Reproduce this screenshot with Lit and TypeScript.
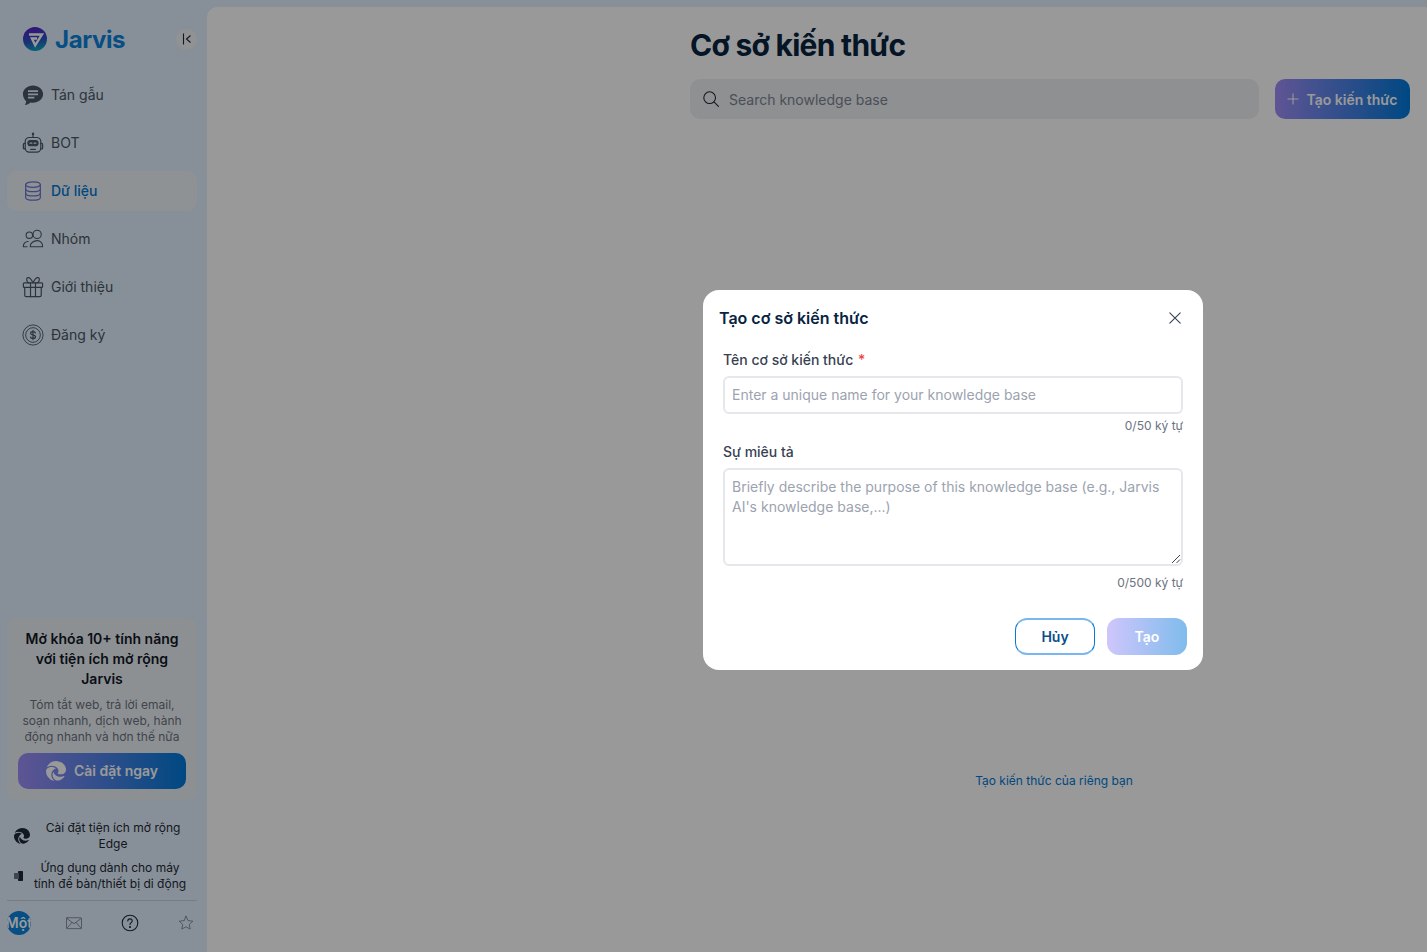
import { LitElement, html, css, svg } from "lit";
import { customElement } from "lit/decorators.js";

const edge = (size: number, fill: string) => html`<svg width=${size} height=${size} viewBox="0 0 24 24" aria-hidden="true">
  <path fill=${fill} d="M21.86 17.86q.14 0 .25.12.1.13.1.25t-.11.33l-.32.46-.43.53-.44.5q-.21.25-.38.42l-.22.23q-.58.53-1.34 1.04-.76.51-1.6.91-.86.4-1.74.64t-1.67.24q-.9 0-1.69-.28-.8-.28-1.48-.78-.68-.5-1.22-1.17-.53-.66-.92-1.44-.38-.77-.58-1.6-.2-.83-.2-1.67 0-1 .32-1.96.33-.97.87-1.8.14.95.55 1.77.41.82 1.02 1.5.6.68 1.38 1.21.78.54 1.64.9.86.36 1.77.56.92.2 1.8.2 1.12 0 2.18-.24 1.06-.23 2.06-.72l.2-.1.2-.05zm-15.5-1.27q0 1.1.27 2.15.27 1.06.78 2.03.51.96 1.24 1.77.74.82 1.66 1.4-1.47-.2-2.8-.74-1.33-.55-2.48-1.37-1.15-.83-2.08-1.9-.92-1.07-1.58-2.33T.36 14.94Q0 13.54 0 12.06q0-.81.32-1.49.31-.68.83-1.23.53-.55 1.2-.96.66-.4 1.35-.66.74-.27 1.5-.39.78-.12 1.55-.12.7 0 1.42.1.72.12 1.4.35.68.23 1.32.57.63.35 1.16.83-.35 0-.7.07-.33.07-.65.23v-.02q-.63.28-1.2.74-.57.46-1.05 1.04-.48.58-.87 1.26-.38.67-.65 1.39-.27.71-.42 1.44-.15.72-.15 1.38zM11.96.06q1.7 0 3.33.39 1.63.38 3.07 1.15 1.43.77 2.62 1.93 1.18 1.16 1.98 2.7.49.94.76 1.96.28 1 .28 2.08 0 .89-.23 1.7-.24.8-.69 1.48-.45.68-1.1 1.22-.64.53-1.45.88-.54.24-1.11.36-.58.13-1.16.13-.42 0-.97-.03-.54-.03-1.1-.12-.55-.1-1.05-.28-.5-.19-.84-.5-.12-.09-.23-.24-.1-.16-.1-.33 0-.15.16-.35.16-.2.35-.5.2-.28.36-.68.16-.4.16-.95 0-1.06-.4-1.96-.4-.91-1.06-1.64-.66-.74-1.52-1.28-.86-.55-1.79-.89-.84-.3-1.72-.44-.87-.14-1.76-.14-1.55 0-3.06.45T.94 7.55q.71-1.74 1.81-3.13 1.1-1.38 2.52-2.35Q6.68 1.1 8.37.58q1.7-.52 3.58-.52Z"/>
</svg>`;

const ico = (body: unknown, size = 22, sw = 1.3) => html`<svg class="ico" width=${size} height=${size} viewBox="0 0 24 24" fill="none" stroke="currentColor" stroke-width=${sw} stroke-linecap="round" stroke-linejoin="round" aria-hidden="true">${body}</svg>`;

const icons = {
  chat: html`<svg class="ico" width="22" height="22" viewBox="0 0 24 24" aria-hidden="true"><path fill="currentColor" d="M12 1.500c6 0 11 3.900 11 9.500 0 5.400-5 9.500-11 9.500-1 0-2-.1-2.900-.3C7.700 21.700 5.700 22.700 3 23c1-1.300 1.500-2.700 1.600-4.200C2.400 17 1 14.200 1 11 1 5.400 6 1.500 12 1.500Z"/><path stroke="#e2f0fd" stroke-width="1.900" d="M6.500 7.800h11M6.500 11.300h11M6.500 14.800h7"/></svg>`,
  bot: ico(svg`<path d="M12 2.500v3.500"/><circle cx="12" cy="2" r=".7" fill="currentColor"/><rect x="3.500" y="6" width="17" height="16" rx="4.500"/><path d="M3.500 12.500H2.500c-.6 0-1 .4-1 1v4c0 .6.4 1 1 1h1M20.500 12.500h1c.6 0 1 .4 1 1v4c0 .6-.4 1-1 1h-1"/><rect x="6.500" y="9.500" width="11" height="5.500" rx="2.700" fill="currentColor"/><path d="M9.500 19h5"/><path d="M8.800 12.200h2M13.200 12.200h2" stroke="#e2f0fd"/>`),
  data: ico(svg`<ellipse cx="12" cy="5" rx="8" ry="3"/><path d="M4 5v14c0 1.700 3.600 3 8 3s8-1.300 8-3V5"/><path d="M4 9.700c0 1.700 3.600 3 8 3s8-1.300 8-3M4 14.400c0 1.700 3.600 3 8 3s8-1.300 8-3"/>`),
  team: ico(svg`<circle cx="8" cy="7.800" r="3.500"/><circle cx="16.500" cy="7" r="4.500"/><path d="M9 20.500h13.500c.3-4.200-2.500-6.700-6-6.700s-7.800 2.500-7.500 6.700Z"/><path d="M5.500 20.500H1.500c-.3-3.200 1.700-5.800 5.200-5.800"/>`, 22, 1.2),
  gift: ico(svg`<rect x="1.500" y="7.500" width="21" height="5" rx="1"/><path d="M3 12.500V21a1.500 1.500 0 0 0 1.500 1.500h15A1.500 1.500 0 0 0 21 21v-8.500"/><path d="M9.300 7.500v15M14.700 7.500v15"/><path d="M12 7.500C10 3 8 1.300 6.300 1.800 4.300 2.400 4.800 6.200 7.500 7.500M12 7.500c2-4.500 4-6.200 5.700-5.700 2 .6 1.500 4.400-1.200 5.700"/>`),
  dollar: html`<svg class="ico" width="22" height="22" viewBox="0 0 24 24" fill="none" stroke="currentColor" stroke-width="1" aria-hidden="true"><circle cx="12" cy="12" r="11"/><circle cx="12" cy="12" r="8"/><path stroke-width="1.300" stroke-linecap="round" d="M14.600 9.800c-.3-.9-1.300-1.500-2.600-1.500-1.500 0-2.600.8-2.600 1.900 0 2.600 5.400 1.300 5.400 3.700 0 1.100-1.200 1.900-2.800 1.900-1.400 0-2.400-.6-2.800-1.600M12 7v10"/></svg>`,
};

const navItems = [
  ["Tán gẫu", icons.chat, false],
  ["BOT", icons.bot, false],
  ["Dữ liệu", icons.data, true],
  ["Nhóm", icons.team, false],
  ["Giới thiệu", icons.gift, false],
  ["Đăng ký", icons.dollar, false],
] as const;

@customElement("app-root")
export class AppRoot extends LitElement {
  static styles = css`
    :host { display: block; width: 100%; height: 952px; overflow: hidden; position: relative; font-family: Inter, "Noto Sans", sans-serif; background: #e2f0fd; color: #0f172a; }
    * { box-sizing: border-box; }
    .shell { display: flex; height: 952px; }
    .side { width: 207px; flex: none; display: flex; flex-direction: column; height: 100%; }
    .brand { display: flex; align-items: center; height: 78px; padding: 0 10px 0 23px; }
    .logo { width: 24px; height: 24px; flex: none; }
    .brand-name { font-size: 24px; font-weight: 700; line-height: 29px; color: #0a82dc; margin-left: 8px; flex: 1; letter-spacing: -0.4px; }
    .collapse { width: 21px; height: 21px; border-radius: 50%; background: #f1f3f5; display: flex; align-items: center; justify-content: center; color: #1f2937; }
    .nav { display: flex; flex-direction: column; gap: 8px; padding: 0 10px 0 7px; margin-top: -3px; }
    .nav-item { display: flex; align-items: center; height: 40px; padding-left: 15px; gap: 7px; border-radius: 10px; font-size: 14px; color: #4b5563; }
    .nav-item span { margin-bottom: 2px; }
    .nav-item.on { background: #eef4f8; color: #0078d4; font-weight: 500; }
    .nav-item.on .ico { color: #6d74d0; }
    .ico { flex: none; display: block; }
    .spacer { flex: 1; }
    .promo { margin: 0 10px 0 7px; padding: 11px; background: #ebf1f5; border-radius: 10px; text-align: center; }
    .promo-title { font-size: 14px; font-weight: 600; line-height: 20px; color: #111827; margin: 0 0 8px; }
    .promo-text { font-size: 12px; line-height: 16px; color: #6b7280; margin: 0 0 8px; }
    .install { height: 36px; border-radius: 10px; display: flex; align-items: center; justify-content: center; gap: 8px; color: #fff; font-size: 14px; font-weight: 600; background: linear-gradient(90deg, #9f8df7, #0079d9); }
    .install span { margin-bottom: 2px; }
    .links { padding: 20px 10px 0 7px; display: flex; flex-direction: column; gap: 8px; }
    .link { display: flex; align-items: center; font-size: 12px; line-height: 16px; color: #1f2937; text-align: center; }
    .link span { flex: 1; }
    .link svg { flex: none; }
    .link-edge svg { margin: 0 4px 0 7px; }
    .link-edge span { margin-right: 5px; }
    .link-app svg { margin: 0 5px 0 6px; }
    .link-app span { margin-right: 7px; }
    .foot { margin: 8px 10px 6px 7px; border-top: 1px solid #c9ced4; height: 46px; display: flex; align-items: center; gap: 37px; color: #6b7280; }
    .foot > * { margin-bottom: 2px; }
    .avatar { width: 24px; height: 24px; border-radius: 50%; background: #0a82dc; color: #fff; font-size: 14px; font-weight: 600; line-height: 24px; overflow: hidden; white-space: nowrap; display: flex; justify-content: center; margin-right: -3px; }
    .main { flex: 1; margin-top: 7px; background: #fff; border-top-left-radius: 10px; display: grid; grid-template-columns: 483px 1fr; }
    .col { display: flex; flex-direction: column; padding-right: 17px; height: 100%; }
    h1 { font-size: 30px; font-weight: 700; line-height: 36px; margin: 20px 0 16px; color: #082440; letter-spacing: -0.73px; }
    .bar { display: flex; gap: 16px; }
    .search { flex: 1; height: 40px; border-radius: 10px; background: #eef0f2; display: flex; align-items: center; gap: 9px; padding-left: 12px; font-size: 14px; color: #7b8494; }
    .create { width: 135px; height: 40px; border-radius: 10px; color: #fff; font-size: 14px; font-weight: 600; display: flex; align-items: center; justify-content: center; gap: 7px; background: linear-gradient(90deg, #9f8df7, #0079d9); }
    .empty { margin: 654px -8px 0 0; text-align: center; font-size: 12px; line-height: 16px; color: #0078d4; }
    .overlay { position: absolute; inset: 0; background: rgba(0,0,0,.4); }
    .modal { position: absolute; left: 703px; top: 290px; width: 500px; height: 380px; background: #fff; border-radius: 16px; padding: 16px 20px 15px 16px; display: flex; flex-direction: column; }
    .modal-head { display: flex; align-items: center; justify-content: space-between; height: 24px; }
    h2 { margin: 0; font-size: 16px; font-weight: 600; line-height: 24px; color: #082440; }
    .close { color: #374151; display: flex; margin-right: -4px; }
    .body { padding: 0 0 0 4px; }
    label { display: block; font-size: 14px; font-weight: 500; line-height: 20px; color: #374151; }
    .l1 { margin-top: 20px; }
    .req { color: #ef4444; margin-left: 1px; }
    .field { margin-top: 6px; width: 460px; border: 2px solid #e5e7eb; border-radius: 6px; font-size: 14px; line-height: 20px; color: #9ca3af; padding: 0 7px; }
    .input { height: 38px; display: flex; align-items: center; }
    .area { height: 98px; padding-top: 7px; position: relative; }
    .grip { position: absolute; right: 0; bottom: 0; display: block; }
    .count { width: 460px; text-align: right; font-size: 12px; line-height: 16px; color: #6b7280; margin-top: 4px; }
    .l2 { margin-top: 8px; }
    .c2 { margin-top: 9px; }
    .actions { margin-top: auto; display: flex; justify-content: flex-end; gap: 12px; margin-right: -4px; }
    .btn { width: 80px; height: 37px; border-radius: 12px; display: flex; align-items: center; justify-content: center; font-size: 14px; font-weight: 600; }
    .cancel { border-style: solid; border-width: 2px 1px; border-color: #78b8ee #0a78d2; color: #0a4f8a; }
    .ok { color: #fff; background: linear-gradient(90deg, #cfc6fb, #7fbcec); }
  `;

  render() {
    return html`
      <div class="shell">
        <aside class="side">
          <div class="brand">
            <svg class="logo" viewBox="0 0 24 24" aria-hidden="true">
              <defs><linearGradient id="lg" x1=".35" y1="0" x2=".55" y2="1"><stop offset="0" stop-color="#5a1fd0"/><stop offset=".55" stop-color="#2f4fc0"/><stop offset="1" stop-color="#08a8c8"/></linearGradient></defs>
              <circle cx="12" cy="12" r="12" fill="url(#lg)"/>
              <path fill="none" stroke="#fff" stroke-width="2.400" stroke-linejoin="miter" d="M6 7.500h13l-6.800 10.800-3.300-6.800h5.200"/>
            </svg>
            <div class="brand-name">Jarvis</div>
            <div class="collapse"><svg width="12" height="12" viewBox="0 0 12 12" fill="none" stroke="currentColor" stroke-width="1.100" aria-hidden="true"><path d="M2.500 .5v11M9.500 2.500 5.500 6l4 3.500"/></svg></div>
          </div>
          <nav class="nav">
            ${navItems.map(([label, icon, on]) => html`<div class="nav-item ${on ? "on" : ""}">${icon}<span>${label}</span></div>`)}
          </nav>
          <div class="spacer"></div>
          <div class="promo">
            <p class="promo-title">Mở khóa 10+ tính năng với tiện ích mở rộng Jarvis</p>
            <p class="promo-text">Tóm tắt web, trả lời email, soạn nhanh, dịch web, hành động nhanh và hơn thế nữa</p>
            <div class="install">${edge(20, "#fff")}<span>Cài đặt ngay</span></div>
          </div>
          <div class="links">
            <div class="link link-edge">${edge(16, "#1f2937")}<span>Cài đặt tiện ích mở rộng Edge</span></div>
            <div class="link link-app"><svg width="12" height="12" viewBox="0 0 12 12" aria-hidden="true"><rect x="5" y="1" width="5" height="10" rx=".8" fill="#1f2937"/><rect x="1" y="3" width="5" height="6" rx=".5" fill="#6b7280"/></svg><span>Ứng dụng dành cho máy tính để bàn/thiết bị di động</span></div>
          </div>
          <div class="foot">
            <div class="avatar"><span>Một</span></div>
            ${ico(svg`<rect x="2" y="5" width="20" height="14.500" rx="1"/><path d="m2.500 6 9.500 7L21.500 6M2.500 19l7-8M21.500 19l-7-8"/>`, 18, 1)}
            <svg width="20" height="20" viewBox="0 0 20 20" fill="none" stroke="#1f2937" stroke-width="1.100" aria-hidden="true"><circle cx="10" cy="10" r="7.800"/><path stroke-linecap="round" d="M7.800 8c0-1.300 1-2.100 2.200-2.100s2.200.8 2.200 2c0 1.700-2.200 1.700-2.200 3.500"/><circle cx="10" cy="14" r=".5" fill="#1f2937"/></svg>
            ${ico(svg`<path d="m12 3 2.700 5.800 6.300.8-4.600 4.300 1.200 6.200L12 17.100l-5.600 3 1.200-6.200L3 9.600l6.300-.8Z"/>`, 18, 1)}
          </div>
        </aside>
        <main class="main">
          <div></div>
          <div class="col">
            <h1>Cơ sở kiến thức</h1>
            <div class="bar">
              <div class="search">
                <svg width="18" height="18" viewBox="0 0 20 20" fill="none" stroke="#1f2937" stroke-width="1.200" stroke-linecap="round" aria-hidden="true"><circle cx="8.500" cy="8.500" r="6.500"/><path d="m13.300 13.300 5 5"/></svg>
                <span>Search knowledge base</span>
              </div>
              <div class="create">
                <svg width="12" height="12" viewBox="0 0 12 12" stroke="currentColor" stroke-width="1.100" aria-hidden="true"><path d="M6 .5v11M.5 6h11"/></svg>
                <span>Tạo kiến thức</span>
              </div>
            </div>
            <div class="empty">Tạo kiến thức của riêng bạn</div>
          </div>
        </main>
      </div>
      <div class="overlay"></div>
      <div class="modal">
        <div class="modal-head">
          <h2>Tạo cơ sở kiến thức</h2>
          <span class="close"><svg width="24" height="24" viewBox="0 0 24 24" stroke="currentColor" stroke-width="1.100" stroke-linecap="round" aria-hidden="true"><path d="m6.800 6.800 10.400 10.400M17.200 6.800 6.800 17.200"/></svg></span>
        </div>
        <div class="body">
          <label class="l1">Tên cơ sở kiến thức <span class="req">*</span></label>
          <div class="field input">Enter a unique name for your knowledge base</div>
          <div class="count">0/50 ký tự</div>
          <label class="l2">Sự miêu tả</label>
          <div class="field area">Briefly describe the purpose of this knowledge base (e.g., Jarvis AI's knowledge base,...)
            <svg class="grip" width="11" height="11" viewBox="0 0 11 11" stroke="#444" stroke-width="1" aria-hidden="true"><path d="M2 10 10 2M6.500 10 10 6.500"/></svg>
          </div>
          <div class="count c2">0/500 ký tự</div>
        </div>
        <div class="actions">
          <div class="btn cancel">Hủy</div>
          <div class="btn ok">Tạo</div>
        </div>
      </div>
    `;
  }
}
